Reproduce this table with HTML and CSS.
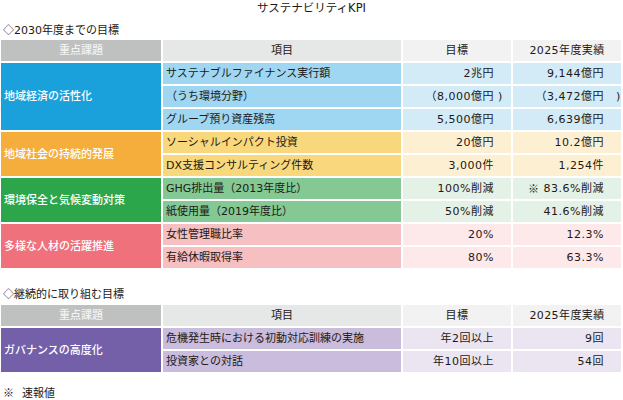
FILE: index.html
```html
<!DOCTYPE html>
<html lang="ja">
<head>
<meta charset="utf-8">
<title>サステナビリティKPI</title>
<link rel="stylesheet" href="styles.css">
</head>
<body>
<div class="page">
  <div class="title">サステナビリティKPI</div>
  <div class="heading"><span class="cjk">◇</span>2030年度までの目標</div>
  <div class="kpi">
    <div class="cell head head-cat">重点課題</div>
    <div class="cell head head-item">項目</div>
    <div class="cell head head-val">目標</div>
    <div class="cell head head-val">2025年度実績</div>

    <div class="cell cat blue span3">地域経済の活性化</div>
    <div class="cell item blue-item">サステナブルファイナンス実行額</div>
    <div class="cell val blue-val">2兆円</div>
    <div class="cell val blue-val">9,144億円</div>
    <div class="cell item blue-item">（うち環境分野）</div>
    <div class="cell val blue-val">（8,000億円<span class="hang"> )</span></div>
    <div class="cell val blue-val">（3,472億円<span class="hang">&nbsp;&nbsp;&nbsp;)</span></div>
    <div class="cell item blue-item">グループ預り資産残高</div>
    <div class="cell val blue-val">5,500億円</div>
    <div class="cell val blue-val">6,639億円</div>

    <div class="cell cat orange span2">地域社会の持続的発展</div>
    <div class="cell item orange-item">ソーシャルインパクト投資</div>
    <div class="cell val orange-val">20億円</div>
    <div class="cell val orange-val">10.2億円</div>
    <div class="cell item orange-item">DX支援コンサルティング件数</div>
    <div class="cell val orange-val">3,000件</div>
    <div class="cell val orange-val">1,254件</div>

    <div class="cell cat green span2">環境保全と気候変動対策</div>
    <div class="cell item green-item">GHG排出量（2013年度比）</div>
    <div class="cell val green-val">100%削減</div>
    <div class="cell val green-val"><span class="cjk mark-inline">※</span>83.6%削減</div>
    <div class="cell item green-item">紙使用量（2019年度比）</div>
    <div class="cell val green-val">50%削減</div>
    <div class="cell val green-val">41.6%削減</div>

    <div class="cell cat pink span2">多様な人材の活躍推進</div>
    <div class="cell item pink-item">女性管理職比率</div>
    <div class="cell val pink-val">20%</div>
    <div class="cell val pink-val">12.3%</div>
    <div class="cell item pink-item">有給休暇取得率</div>
    <div class="cell val pink-val">80%</div>
    <div class="cell val pink-val">63.3%</div>
  </div>

  <div class="heading heading-2"><span class="cjk">◇</span>継続的に取り組む目標</div>
  <div class="kpi">
    <div class="cell head head-cat">重点課題</div>
    <div class="cell head head-item">項目</div>
    <div class="cell head head-val">目標</div>
    <div class="cell head head-val">2025年度実績</div>

    <div class="cell cat purple span2">ガバナンスの高度化</div>
    <div class="cell item purple-item">危機発生時における初動対応訓練の実施</div>
    <div class="cell val purple-val">年2回以上</div>
    <div class="cell val purple-val">9回</div>
    <div class="cell item purple-item">投資家との対話</div>
    <div class="cell val purple-val">年10回以上</div>
    <div class="cell val purple-val">54回</div>
  </div>

  <div class="note"><span class="mark cjk">※</span>速報値</div>
</div>
</body>
</html>
```

FILE: styles.css
```css
html, body {
  margin: 0;
  padding: 0;
  background: #ffffff;
}

body {
  font-family: "DejaVu Sans", "Noto Sans CJK JP", sans-serif;
  font-size: 11px;
  color: #231815;
}

.cjk {
  font-family: "Noto Sans CJK JP", sans-serif;
}

.page {
  width: 623px;
  display: flex;
  flex-direction: column;
}

.title {
  height: 16px;
  line-height: 16px;
  text-align: center;
  font-size: 11.5px;
}

.heading {
  height: 16px;
  line-height: 16px;
  margin-top: 5px;
  margin-bottom: 3px;
  padding-left: 3px;
}

.heading-2 {
  margin-top: 17px;
  margin-bottom: 4px;
}

.kpi {
  display: grid;
  grid-template-columns: 160px 238px 108px 108px;
  grid-auto-rows: 21px;
  gap: 2px;
  margin-left: 1px;
}

.cell {
  display: flex;
  align-items: center;
  white-space: nowrap;
  line-height: 1;
}

.head {
  justify-content: center;
}

.head-cat {
  background: #bfc1c1;
  color: #f3f3f3;
  font-weight: 500;
}

.head-item {
  background: #e6e7e7;
}

.head-val {
  background: #f1f2f1;
  letter-spacing: 0.4px;
}

.cat {
  color: #ffffff;
  padding-left: 3px;
  font-weight: 500;
}

.span2 { grid-row: span 2; }
.span3 { grid-row: span 3; }

.item {
  padding-left: 3px;
}

.val {
  justify-content: flex-end;
  padding-right: 17px;
  letter-spacing: 0.5px;
}

.hang {
  display: inline-block;
  width: 0;
  white-space: pre;
}

.blue { background: #1aa1db; }
.blue-item { background: #9fd6f1; }
.blue-val { background: #d2ebf7; }

.orange { background: #f5ae3c; }
.orange-item { background: #f9d77c; }
.orange-val { background: #fdf0d2; }

.green { background: #2ba64b; }
.green-item { background: #84c994; }
.green-val { background: #e3f1e6; }

.pink { background: #ee717c; }
.pink-item { background: #f6bfc2; }
.pink-val { background: #fde9ea; }

.purple { background: #7460a9; }
.purple-item { background: #c9bcdc; }
.purple-val { background: #ebe5f2; }

.note {
  height: 16px;
  line-height: 16px;
  margin-top: 12px;
  padding-left: 3px;
}

.mark {
  margin-right: 8px;
}

.mark-inline {
  margin-right: 4px;
}
```
